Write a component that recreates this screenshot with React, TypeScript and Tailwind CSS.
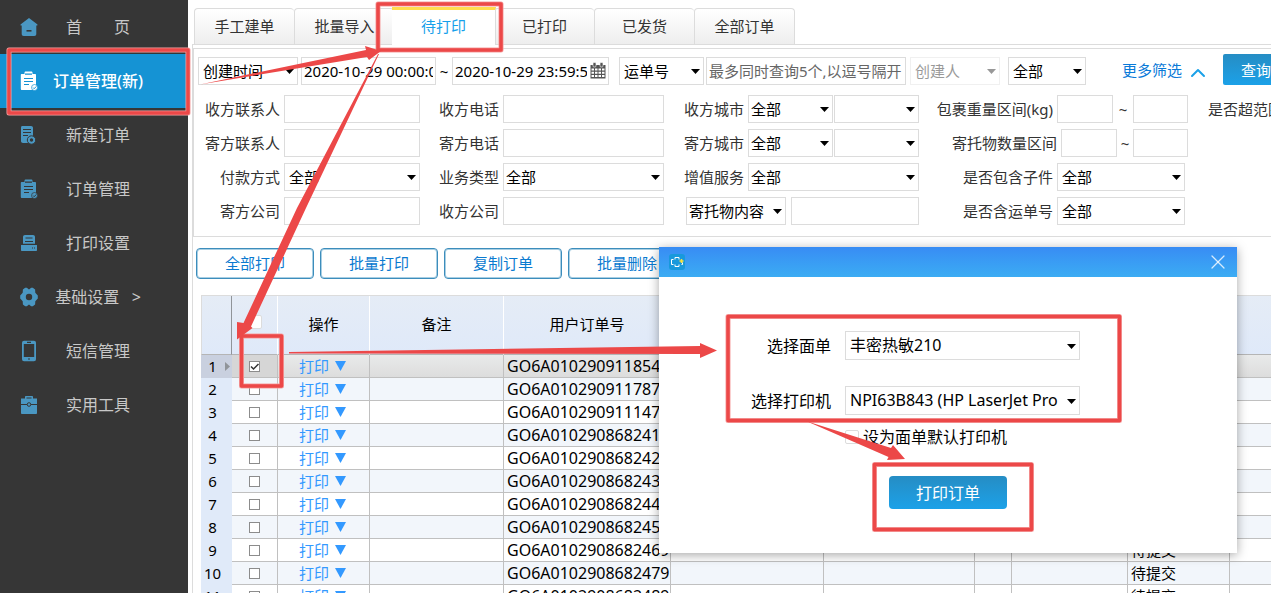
import React from 'react';
import { ChevronUp, X } from 'lucide-react';
import clsx from 'clsx';

const tabs = ['手工建单', '批量导入', '待打印', '已打印', '已发货', '全部订单'];
const actions = ['全部打印', '批量打印', '复制订单', '批量删除'];
const orders = [
  'GO6A0102909118544',
  'GO6A0102909117874',
  'GO6A0102909111470',
  'GO6A0102908682417',
  'GO6A0102908682424',
  'GO6A0102908682439',
  'GO6A0102908682446',
  'GO6A0102908682459',
  'GO6A0102908682469',
  'GO6A0102908682479',
  'GO6A0102908682489',
];

const field = 'h-7 border border-[#dcdcdc] bg-white text-black outline-none rounded-none';

/* ---------- icons ---------- */

function HomeIcon() {
  return (
    <svg viewBox="0 0 18 20" className="w-[18px] h-5" fill="currentColor">
      <path d="M9 1 .8 7.200c-.6.5-.4 1.300.4 1.300h.5V17c0 1.200.8 2 2 2h10.600c1.200 0 2-.8 2-2V8.500h.5c.8 0 1-.8.4-1.300z" />
      <path d="M6.500 13h5v1.600h-5z" fill="#363636" />
    </svg>
  );
}

function ClipboardIcon({ cut }: { cut: string }) {
  return (
    <svg viewBox="0 0 18 20" className="w-[18px] h-5" fill="currentColor">
      <path d="M1.500 3h3V1.800C4.500.8 5 .5 6 .5h5c1 0 1.500.3 1.500 1.300V3H15c.6 0 1 .4 1 1v15H2c-.8 0-1.200-.4-1.200-1.200V4c0-.6.2-1 .7-1z" />
      <path d="M5 3.200h7M4 7.500h9M4 10.500h9M4 13.500h5" stroke={cut} strokeWidth="1.200" />
      <circle cx="14.500" cy="16.500" r="3" stroke={cut} strokeWidth=".7" />
      <path d="m13 16.500 1.200 1.200 2-2.200" stroke={cut} fill="none" />
    </svg>
  );
}

function NewOrderIcon() {
  return (
    <svg viewBox="0 0 18 20" className="w-[18px] h-5" fill="currentColor">
      <path d="M2.500 1h8.500c1.200 0 2 .8 2 2v15H3c-1.200 0-2-.8-2-2V2.500C1 1.500 1.500 1 2.500 1z" />
      <path d="M3 4.500h8M3 7.500h8M3 10.500h5" stroke="#363636" strokeWidth="1.200" />
      <circle cx="11.500" cy="15" r="4.200" stroke="#363636" />
      <circle cx="11.500" cy="15" r="1.700" fill="#363636" />
    </svg>
  );
}

function PrinterIcon() {
  return (
    <svg viewBox="0 0 18 20" className="w-[18px] h-5" fill="currentColor">
      <path d="M5 2h8c1.200 0 2 .8 2 2v7H3V4c0-1.200.8-2 2-2zM2 11.500h14c.6 0 1 .4 1 1V17c0 .6-.4 1-1 1H2c-.6 0-1-.4-1-1v-4.500c0-.6.4-1 1-1z" />
      <path d="M5.500 5h7M5 8.500h8M1 11.300h16M12 15h1M14 15h1" stroke="#363636" strokeWidth="1.200" />
    </svg>
  );
}

function GearIcon() {
  return (
    <svg viewBox="0 0 18 20" className="w-[18px] h-5" fill="currentColor">
      <path d="M5.200.8h1.600L9 2.600 11.200.8h1.600l2.300 1.800.2 3.200 2.500 2.700v3l-2.500 2.700-.2 3.200-2.300 1.800h-1.600L9 17.400l-2.200 1.800H5.200l-2.300-1.800-.2-3.200L.2 11.500v-3l2.500-2.700.2-3.200z" />
      <circle cx="9" cy="10" r="3.200" fill="#363636" />
    </svg>
  );
}

function PhoneIcon() {
  return (
    <svg viewBox="0 0 18 22" className="w-[18px] h-[22px]" fill="currentColor">
      <path fillRule="evenodd" d="M4 .8h10a2 2 0 0 1 2 2v16.400a2 2 0 0 1-2 2H4a2 2 0 0 1-2-2V2.800a2 2 0 0 1 2-2zM3.800 4v13h10.400V4z" />
      <path d="M7 2.400h4M8 19h2" stroke="#363636" strokeWidth="1.200" />
    </svg>
  );
}

function ToolboxIcon() {
  return (
    <svg viewBox="0 0 18 20" className="w-[18px] h-5" fill="currentColor">
      <path d="M5 3.500V2c0-.6.4-1 1-1h6c.6 0 1 .4 1 1v1.500h4V9H1V3.500zM1 10h16v8c0 .5-.3.900-.8.900H1.800c-.5 0-.8-.4-.8-.9z" />
      <path d="M6.500 3h5" stroke="#363636" />
      <circle cx="9" cy="9.500" r="1.800" stroke="#363636" />
    </svg>
  );
}

function CalendarIcon() {
  return (
    <svg viewBox="0 0 16 17" className="absolute right-0.5 top-1 w-4 h-[17px]" fill="#555">
      <path d="M.5 3h15v13.500H.5z" />
      <rect x="3" y=".5" width="3" height="4.500" rx="1" stroke="#fff" strokeWidth=".6" />
      <rect x="10" y=".5" width="3" height="4.500" rx="1" stroke="#fff" strokeWidth=".6" />
      <path d="M1.500 6.500h2.500v2H1.500zm3.500 0h2.500v2H5zm3.500 0H11v2H8.500zm3.500 0h2.500v2H12zM1.500 9.700h2.500v2H1.500zm3.500 0h2.500v2H5zm3.500 0H11v2H8.500zm3.500 0h2.500v2H12zM1.500 13h2.500v2H1.500zm3.500 0h2.500v2H5zm3.500 0H11v2H8.500zm3.500 0h2.500v2H12z" fill="#fff" />
    </svg>
  );
}

/* ---------- form parts ---------- */

interface SelectProps {
  id?: string;
  label: string;
  value: string;
  className: string;
  roomy?: boolean;
  disabled?: boolean;
}

function Select({ id, label, value, className, roomy, disabled }: SelectProps) {
  return (
    <div className={clsx('relative shrink-0', className, disabled && 'opacity-40')}>
      <select
        id={id}
        aria-label={id ? undefined : label}
        disabled={disabled}
        className={clsx(field, 'w-full h-full appearance-none pr-4 pb-px', roomy ? 'pl-1' : 'pl-0.5')}
      >
        <option>{value}</option>
      </select>
      <svg viewBox="0 0 9 5" className="absolute right-1 top-1/2 -mt-0.5 w-[9px] h-[5px] pointer-events-none">
        <path d="M0 0h9L4.500 5z" />
      </svg>
    </div>
  );
}

function Row({ id, label, children }: { id: string; label: string; children: React.ReactNode }) {
  return (
    <div className="flex h-7 items-center justify-end gap-1">
      <label htmlFor={id}>{label}</label>
      {children}
    </div>
  );
}

function TextBox({ id, className }: { id: string; className: string }) {
  return <input id={id} type="text" aria-label={id} className={clsx(field, 'shrink-0 px-1', className)} />;
}

/* ---------- sections ---------- */

function Sidebar() {
  const items = [
    { icon: <HomeIcon />, text: '首\u3000\u3000页' },
    { icon: <ClipboardIcon cut="#1593d4" />, text: '订单管理(新)', active: true },
    { icon: <NewOrderIcon />, text: '新建订单' },
    { icon: <ClipboardIcon cut="#363636" />, text: '订单管理' },
    { icon: <PrinterIcon />, text: '打印设置' },
    { icon: <GearIcon />, text: '基础设置\u00a0\u00a0 >' },
    { icon: <PhoneIcon />, text: '短信管理' },
    { icon: <ToolboxIcon />, text: '实用工具' },
  ];
  return (
    <nav className="w-[188px] shrink-0 bg-[#363636]">
      {items.map((item) => (
        <a
          key={item.text}
          href="#"
          className={clsx(
            'flex h-[54px] items-center pl-5 text-base leading-6',
            item.active ? 'bg-[#1593d4] font-medium text-white' : 'text-[#c8c8c8]'
          )}
        >
          <span className={item.active ? 'text-white' : 'text-[#4a97c2]'}>{item.icon}</span>
          <span className="w-[120px] text-center whitespace-nowrap">{item.text}</span>
        </a>
      ))}
    </nav>
  );
}

function Tabs() {
  return (
    <div className="flex items-end pl-0.5 pt-2">
      {tabs.map((tab) => (
        <button
          key={tab}
          className={clsx(
            'shrink-0 text-center',
            tab === '待打印'
              ? 'relative z-10 -mx-0.5 -mt-px -mb-px h-[38px] w-[104px] border-t-[3px] border-r border-t-[#ffdc4f] border-r-[#dcdcdc] bg-white pb-1 text-[#16a0ea]'
              : 'h-9 w-[100px] rounded-t-sm border-l border-t border-[#dcdcdc] bg-linear-to-b from-white to-[#eeeeee] pb-0.5 text-[#333] last:w-[101px] last:border-r'
          )}
        >
          {tab}
        </button>
      ))}
    </div>
  );
}

function Filters() {
  return (
    <form className="border border-r-0 border-[#dcdcdc] pb-[11px] pl-1 pt-[5px] whitespace-nowrap">
      <div className="flex h-[31px] items-end">
        <Select label="时间类型" value="创建时间" className="h-7 w-[100px]" roomy />
        <input aria-label="开始时间" defaultValue="2020-10-29 00:00:00" className={clsx(field, 'ml-[3px] w-[135px] shrink-0 px-0.5 pb-px')} />
        <span className="w-4 shrink-0 text-center leading-7">~</span>
        <div className="relative flex h-7 w-[157px] shrink-0 border border-[#dcdcdc] bg-white">
          <input aria-label="结束时间" defaultValue="2020-10-29 23:59:59" className="w-[134px] pb-px pl-0.5 text-black outline-none" />
          <CalendarIcon />
        </div>
        <Select label="单号类型" value="运单号" className="ml-2.5 h-7 w-[85px]" roomy />
        <input aria-label="单号" placeholder="最多同时查询5个,以逗号隔开" className={clsx(field, 'ml-0.5 w-[200px] shrink-0 px-0.5 placeholder:text-[#666]')} />
        <Select label="创建人" value="创建人" className="ml-1 h-7 w-[90px]" roomy disabled />
        <Select label="范围" value="全部" className="ml-2 h-7 w-[78px]" roomy />
        <a href="#" className="ml-9 flex shrink-0 items-center leading-7 text-[#0a7ad8]">
          更多筛选
          <ChevronUp className="ml-1 mt-1.5 h-6 w-6 text-[#1ba1e8]" />
        </a>
        <button type="button" className="ml-[13px] h-[31px] w-[70px] shrink-0 rounded-xs bg-linear-to-b from-[#258dc4] to-[#1ba1e8] pr-1 text-white">
          查询
        </button>
      </div>

      <div className="mt-2.5 flex gap-4 text-[#333] *:flex *:shrink-0 *:flex-col *:gap-1.5">
        <div className="w-[222px]">
          <Row id="收方联系人" label="收方联系人"><TextBox id="收方联系人" className="w-[136px]" /></Row>
          <Row id="寄方联系人" label="寄方联系人"><TextBox id="寄方联系人" className="w-[136px]" /></Row>
          <Row id="付款方式" label="付款方式"><Select id="付款方式" label="付款方式" value="全部" className="h-7 w-[136px]" roomy /></Row>
          <Row id="寄方公司" label="寄方公司"><TextBox id="寄方公司" className="w-[136px]" /></Row>
        </div>
        <div className="w-[228px]">
          <Row id="收方电话" label="收方电话"><TextBox id="收方电话" className="w-[161px]" /></Row>
          <Row id="寄方电话" label="寄方电话"><TextBox id="寄方电话" className="w-[161px]" /></Row>
          <Row id="业务类型" label="业务类型"><Select id="业务类型" label="业务类型" value="全部" className="h-7 w-[161px]" /></Row>
          <Row id="收方公司" label="收方公司"><TextBox id="收方公司" className="w-[161px]" /></Row>
        </div>
        <div className="w-[239px]">
          {['收方城市', '寄方城市'].map((name) => (
            <Row key={name} id={name} label={name}>
              <div className="flex gap-px">
                <Select id={name} label={name} value="全部" className="h-7 w-[85px]" />
                <Select label={name + '区县'} value="" className="h-7 w-[85px]" />
              </div>
            </Row>
          ))}
          <Row id="增值服务" label="增值服务"><Select id="增值服务" label="增值服务" value="全部" className="h-7 w-[171px]" /></Row>
          <div className="flex justify-end gap-[5px]">
            <Select label="内容类型" value="寄托物内容" className="h-7 w-[100px]" />
            <TextBox id="寄托物内容" className="w-[128px]" />
          </div>
        </div>
        <div className="w-[253px]">
          <Row id="最小重量" label="包裹重量区间(kg)">
            <div className="flex items-center">
              <TextBox id="最小重量" className="w-14" />
              <span className="w-5 text-center">~</span>
              <TextBox id="最大重量" className="w-[55px]" />
            </div>
          </Row>
          <Row id="最小数量" label="寄托物数量区间">
            <div className="flex items-center">
              <TextBox id="最小数量" className="w-14" />
              <span className="w-4 text-center">~</span>
              <TextBox id="最大数量" className="w-[55px]" />
            </div>
          </Row>
          <div className="flex flex-col gap-1.5 pr-[3px]">
            <Row id="是否包含子件" label="是否包含子件"><Select id="是否包含子件" label="" value="全部" className="h-7 w-32" roomy /></Row>
            <Row id="是否含运单号" label="是否含运单号"><Select id="是否含运单号" label="" value="全部" className="h-7 w-32" roomy /></Row>
          </div>
        </div>
        <div className="pl-1">
          <Row id="是否超范围" label="是否超范围"><Select id="是否超范围" label="" value="全部" className="h-7 w-32" roomy /></Row>
        </div>
      </div>
    </form>
  );
}

function OrderTable() {
  const cell = 'border-r border-b border-[#c0c0c0] last:border-r-0';
  const head = 'border-r border-white pb-0.5 font-normal last:border-r-0';
  return (
    <table className="w-full table-fixed border-separate border-spacing-0 border-t border-[#dcdcdc] text-black">
      <colgroup>
        <col className="w-[31px]" />
        <col className="w-[46px]" />
        <col className="w-[92px]" />
        <col className="w-[134px]" />
        <col className="w-[167px]" />
        <col className="w-[153px]" />
        <col className="w-[151px]" />
        <col className="w-[37px]" />
        <col className="w-[116px]" />
        <col className="w-[102px]" />
        <col />
      </colgroup>
      <thead>
        <tr className="h-[59px] bg-linear-to-b from-[#e5ecf6] to-[#dfe9f9] *:border-b *:border-b-[#b5b5b5]">
          <th className="border-l border-r border-l-[#dcdcdc] border-r-[#909499]" />
          <th className={head}>
            <input type="checkbox" aria-label="全选" className="mx-auto block h-3.5 w-3.5 -translate-y-0.5 appearance-none rounded-xs border border-[#dcdcdc] bg-white" />
          </th>
          <th className={head}>操作</th>
          <th className={head}>备注</th>
          <th className={head}>用户订单号</th>
          {[0, 1, 2, 3, 4, 5].map((n) => (
            <th key={n} className={head} />
          ))}
        </tr>
      </thead>
      <tbody>
        {orders.map((order, i) => (
          <tr
            key={order}
            className={clsx(
              'h-[23px] leading-[22px]',
              i === 0 ? 'bg-linear-to-b from-[#e9eaea] to-[#dcdcdc]' : i % 2 ? 'bg-[#f2f6fb]' : 'bg-white'
            )}
          >
            <td
              className={clsx(
                'relative border-b pr-2',
                i === 0 ? 'border-[#c9d0df] bg-[#c9d0df]' : 'border-[#e0eaf9] bg-[#e0eaf9]'
              )}
            >
              <span className="flex h-[22px] items-center justify-center leading-5">{i + 1}</span>
              {i === 0 && (
                <svg viewBox="0 0 5 9" className="absolute right-0.5 top-[7px] h-[9px] w-[5px]">
                  <path d="M0 0l5 4.500L0 9z" fill="#909499" />
                </svg>
              )}
            </td>
            <td className={clsx(cell, i === 0 && 'bg-[#d6d6d6]')}>
              <span className="relative mx-auto block h-[11px] w-[11px]">
                <input
                  type="checkbox"
                  aria-label={order}
                  defaultChecked={i === 0}
                  className="peer block h-[11px] w-[11px] appearance-none border border-[#8c8c8c] bg-white"
                />
                <svg viewBox="0 0 11 11" className="pointer-events-none absolute inset-0 hidden peer-checked:block">
                  <path d="M2 5.500l2.500 2.500L9.500 3" fill="none" stroke="#333" strokeWidth="1.500" />
                </svg>
              </span>
            </td>
            <td className={cell}>
              <button className="flex items-center gap-1.5 pl-[21px] text-[#3399ff]">
                打印
                <svg viewBox="0 0 11 10" className="h-2.5 w-[11px]" fill="currentColor">
                  <path d="M0 0h11L5.500 10z" />
                </svg>
              </button>
            </td>
            <td className={cell} />
            <td className={clsx(cell, 'pl-[3px] text-base leading-[22px]')}>{order}</td>
            <td className={cell} />
            <td className={cell} />
            <td className={cell} />
            <td className={cell} />
            <td className={clsx(cell, 'pl-[3px]')}>待提交</td>
            <td className={cell} />
          </tr>
        ))}
      </tbody>
    </table>
  );
}

function PrintDialog() {
  return (
    <div role="dialog" aria-label="打印" className="absolute left-[659px] top-[247px] z-20 w-[578px] bg-white pb-11 text-base text-black shadow-[0_2px_10px_rgba(0,0,0,0.35)]">
      <div className="flex h-[30px] items-center justify-between bg-linear-to-b from-[#388cf4] to-[#3cacf3] pl-2.5 pr-[7px]">
        <svg viewBox="0 0 16 16" className="h-4 w-4">
          <rect width="16" height="16" rx="3" fill="#1899dc" />
          <path d="M6 5.500V3.500h4v2M6 10.500v2h4v-2M4.500 5.500h-2v5h2M12.500 10.500h1v-2" fill="none" stroke="#fff" />
          <path d="M12.500 5v4M10.500 7h4" stroke="#ffe23c" strokeWidth="1.500" />
        </svg>
        <button aria-label="关闭">
          <X className="h-6 w-6 text-white/80" strokeWidth={1.25} />
        </button>
      </div>
      <div className="flex flex-col gap-[26px] pt-[54px]">
        <div className="flex items-center">
          <label htmlFor="面单" className="w-[186px] pr-3.5 text-right">选择面单</label>
          <Select id="面单" label="" value="丰密热敏210" className="h-[29px] w-[235px]" roomy />
        </div>
        <div className="flex items-center">
          <label htmlFor="打印机" className="w-[186px] pr-3.5 text-right">选择打印机</label>
          <Select id="打印机" label="" value="NPI63B843 (HP LaserJet Pro" className="h-[29px] w-[235px]" roomy />
        </div>
      </div>
      <label className="ml-[186px] mt-2.5 flex items-center gap-1 leading-6">
        <input type="checkbox" className="h-3.5 w-3.5 appearance-none rounded-xs border border-[#dcdcdc] bg-white" />
        设为面单默认打印机
      </label>
      <button className="ml-[230px] mt-[27px] block h-[33px] w-[118px] rounded-sm bg-linear-to-b from-[#258dc4] to-[#1ba1e8] text-white">
        打印订单
      </button>
    </div>
  );
}

// red boxes and arrows that walk through the printing steps
function Guide() {
  const boxes = [
    [9, 50, 179, 63],
    [378, 4, 123, 46],
    [241.5, 336, 40, 50],
    [728, 316.5, 391.5, 104],
    [874.5, 464.5, 157, 65],
  ];
  return (
    <svg className="pointer-events-none absolute left-0 top-0 z-30 h-[593px] w-[1271px]" viewBox="0 0 1271 593">
      {boxes.map(([x, y, width, height]) => (
        <g key={x} fill="none" strokeLinejoin="round">
          <rect x={x} y={y} width={width} height={height} stroke="#f5a0a0" strokeWidth="5" />
          <rect x={x} y={y} width={width} height={height} stroke="#ec4848" strokeWidth="3.500" />
        </g>
      ))}
      <g fill="#ec4848">
        <path d="M200 84.500 366 50l-1-4 16 5-12 9-2-3z" />
        <path d="M378 54 297 208l-53.500 115-6.500-1v17.500l15.500-11.500-1.500-1.500L306 208l73-154z" />
        <path d="M289 352 700 346v-3l17 7.500-17 7.500v-4l-411-.500z" />
        <path d="M806 421l85 27 2-3 12 14-18 1 1.500-3z" />
      </g>
    </svg>
  );
}

export default function App() {
  return (
    <div className="relative flex h-screen overflow-hidden bg-white font-['Noto_Sans','Noto_Sans_CJK_SC',sans-serif] text-[15px] leading-5">
      <Sidebar />
      <main className="min-w-0 flex-1 overflow-hidden pl-1">
        <Tabs />
        <div className="h-full border-l border-t border-[#dcdcdc] pt-[3px]">
          <Filters />
          <div className="mt-[11px] flex gap-1.5 pl-[3px]">
            {actions.map((action) => (
              <button
                key={action}
                className="h-[31px] w-[118px] shrink-0 rounded-sm border border-[#3c8dbc] bg-white pb-0.5 text-[#0a7ad0] inset-shadow-[0_0_0_1px_#a9cfe3]"
              >
                {action}
              </button>
            ))}
          </div>
          <div className="mt-4 pl-2">
            <OrderTable />
          </div>
        </div>
      </main>
      <PrintDialog />
      <Guide />
    </div>
  );
}
